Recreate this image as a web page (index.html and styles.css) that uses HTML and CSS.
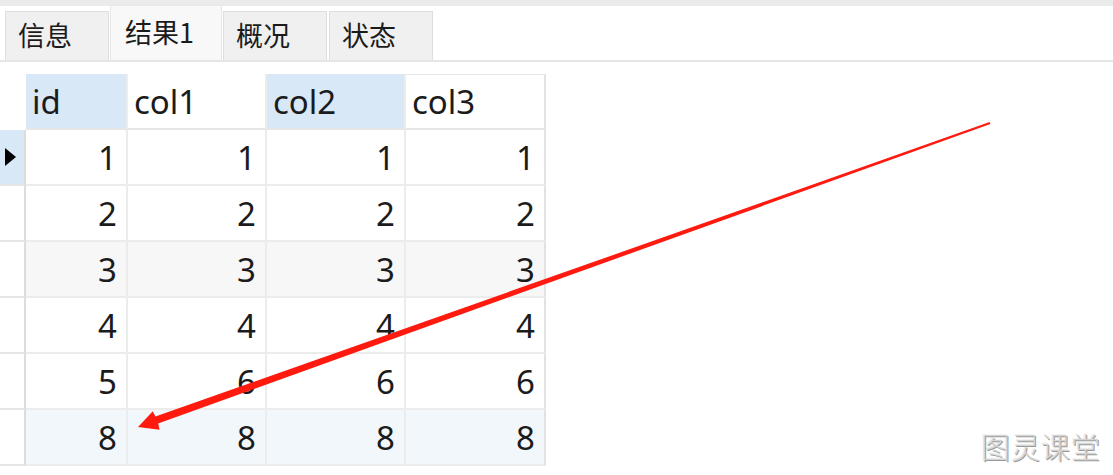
FILE: index.html
```html
<!DOCTYPE html>
<html lang="zh">
<head>
<meta charset="utf-8">
<link rel="stylesheet" href="styles.css">
</head>
<body>
<div class="page">
  <div class="topstrip"></div>
  <div class="tabbar">
    <div class="tab">信息</div>
    <div class="tab active">结果1</div>
    <div class="tab">概况</div>
    <div class="tab">状态</div>
  </div>
  <div class="grid">
    <div class="rh head"></div>
    <div class="cell head sel">id</div>
    <div class="cell head">col1</div>
    <div class="cell head sel">col2</div>
    <div class="cell head last">col3</div>

    <div class="rh cur"><span class="tri"></span></div>
    <div class="cell num">1</div><div class="cell num">1</div><div class="cell num">1</div><div class="cell num last">1</div>

    <div class="rh"></div>
    <div class="cell num">2</div><div class="cell num">2</div><div class="cell num">2</div><div class="cell num last">2</div>

    <div class="rh"></div>
    <div class="cell num alt">3</div><div class="cell num alt">3</div><div class="cell num alt">3</div><div class="cell num alt last">3</div>

    <div class="rh"></div>
    <div class="cell num">4</div><div class="cell num">4</div><div class="cell num">4</div><div class="cell num last">4</div>

    <div class="rh"></div>
    <div class="cell num">5</div><div class="cell num">6</div><div class="cell num">6</div><div class="cell num last">6</div>

    <div class="rh"></div>
    <div class="cell num blue">8</div><div class="cell num blue">8</div><div class="cell num blue">8</div><div class="cell num blue last">8</div>
  </div>
  <div class="watermark">图灵课堂</div>
  <svg class="arrow" width="1113" height="475" viewBox="0 0 1113 475">
    <polygon fill="#ff1a10" points="990.4,123.9 989.6,122.1 155.4,416.6 152.8,411.2 138,427 159.6,429.8 158.2,423.4"/>
  </svg>
</div>
</body>
</html>
```
FILE: styles.css
```css
html, body {
  margin: 0;
  padding: 0;
  background: #ffffff;
}
.page {
  position: relative;
  width: 1113px;
  height: 475px;
  overflow: hidden;
  font-family: "Noto Sans", "Noto Sans CJK SC", sans-serif;
  color: #1b1b1b;
}
.topstrip {
  height: 6px;
  background: #ebebeb;
}
.tabbar {
  display: flex;
  align-items: flex-end;
  height: 56px;
  padding-left: 5px;
  gap: 1px;
  border-bottom: 2px solid #e6e6e6;
  box-sizing: border-box;
  margin-bottom: 12px;
}
.tab {
  width: 104px;
  height: 49px;
  box-sizing: border-box;
  background: #f0f0f0;
  border: 1px solid #dedede;
  border-bottom: none;
  font-family: "Noto Sans CJK SC", sans-serif;
  font-size: 27px;
  line-height: 46px;
  padding-left: 12px;
}
.tab.active {
  width: 112px;
  height: 55px;
  background: #f8f8f8;
  border-color: #e8e8e8;
  line-height: 52px;
  padding-left: 14px;
}
.tab:last-child {
  margin-left: 1px;
}
.grid {
  display: grid;
  grid-template-columns: 26px 102px 139px 139px 140px;
  grid-auto-rows: 56px;
  width: 546px;
}
.rh {
  box-sizing: border-box;
  border-right: 2px solid #dcdcdc;
  border-bottom: 2px solid #e6e6e6;
  display: flex;
  align-items: center;
  justify-content: center;
}
.rh.head {
  border: none;
}
.rh.cur {
  background: #d9e8f6;
}
.tri {
  width: 0;
  height: 0;
  border-top: 9px solid transparent;
  border-bottom: 9px solid transparent;
  border-left: 11px solid #000;
  margin-left: -4px;
}
.cell {
  box-sizing: border-box;
  border-right: 2px solid #ececec;
  border-bottom: 2px solid #ececec;
  font-size: 33px;
  display: flex;
  align-items: center;
  padding: 0 9px 0 6px;
}
.cell.head {
  background: #ffffff;
  border-bottom-color: #e6e6e6;
}
.cell.head.sel {
  background: #d9e8f6;
}
.cell.head.last {
  border-top: 1px solid #e6e6e6;
}
.cell.last {
  border-right-color: #e2e2e2;
}
.num {
  justify-content: flex-end;
}
.alt {
  background: #f7f7f7;
}
.blue {
  background: #f2f7fc;
}
.watermark {
  position: absolute;
  right: 12px;
  bottom: 8px;
  font-family: "Noto Sans CJK SC", sans-serif;
  font-weight: 300;
  font-size: 29px;
  color: #d4d4d4;
  text-shadow: 1px 1px 0 #9a9a9a, -1px -1px 0 #f4f4f4;
  letter-spacing: 1px;
}
.arrow {
  position: absolute;
  left: 0;
  top: 0;
  pointer-events: none;
}
```
